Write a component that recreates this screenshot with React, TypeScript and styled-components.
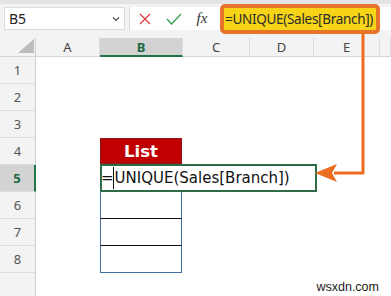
import React from "react";
import styled, { createGlobalStyle } from "styled-components";

const Global = createGlobalStyle`
  html, body { margin: 0; padding: 0; background: #ffffff; overflow: hidden; }
  * { box-sizing: border-box; }
`;

const Screen = styled.div`
  position: relative;
  width: 391px;
  height: 296px;
  overflow: hidden;
  background: #ffffff;
  font-family: "Noto Sans", "Open Sans", sans-serif;
`;

const Toolbar = styled.div`
  display: flex;
  align-items: center;
  height: 38px;
  padding: 0 0 5px 4px;
  background: #f3f3f3;
  border-top: 4px solid #e4e4e4;
`;

const NameBox = styled.div`
  display: flex;
  align-items: center;
  justify-content: space-between;
  width: 121px;
  height: 23px;
  padding: 0 4px 0 4px;
  background: #ffffff;
  border: 1px solid #dadada;
  font-family: "Noto Sans", sans-serif;
  font-size: 14px;
  color: #222;
`;

const FormulaArea = styled.div`
  display: flex;
  align-items: center;
  flex: 1;
  height: 23px;
  margin-left: 4px;
  background: #ffffff;
  border-left: 1px solid #dadada;
`;

const IconSlot = styled.div<{ $w: number }>`
  display: flex;
  align-items: center;
  justify-content: center;
  width: ${(p) => p.$w}px;
  height: 23px;
`;

const Fx = styled.span`
  font-family: "Liberation Serif", serif;
  font-style: italic;
  font-size: 15px;
  color: #333;
`;

const Highlight = styled.div`
  display: flex;
  align-items: center;
  width: 160px;
  height: 30px;
  margin-left: 4px;
  padding-left: 1px;
  background: #f7d417;
  border: 4px solid #e8732a;
  border-radius: 5px;
  font-family: "Noto Sans", sans-serif;
  font-size: 13.5px;
  letter-spacing: -0.3px;
  color: #2b2b2b;
  white-space: nowrap;
  overflow: hidden;
`;

const Sheet = styled.div`
  position: relative;
  display: grid;
  grid-template-columns: 36px 64px 83px 67px 64px 66px 1fr;
  grid-template-rows: 19px repeat(9, 27px);
`;

const Corner = styled.div`
  position: relative;
  background: #f3f3f3;
  border-right: 1px solid #cfcfcf;
  border-bottom: 1px solid #d6d6d6;
`;

const Triangle = styled.div`
  position: absolute;
  right: 1px;
  bottom: 3px;
  width: 0;
  height: 0;
  border-left: 16px solid transparent;
  border-bottom: 14px solid #bdbdbd;
`;

const ColHead = styled.div<{ $sel?: boolean }>`
  display: flex;
  align-items: center;
  justify-content: center;
  background: ${(p) => (p.$sel ? "#d3d3d3" : "#f3f3f3")};
  border-right: 1px solid #dcdcdc;
  border-bottom: ${(p) => (p.$sel ? "2px solid #217346" : "1px solid #d6d6d6")};
  font-size: 13px;
  font-weight: ${(p) => (p.$sel ? 700 : 400)};
  color: ${(p) => (p.$sel ? "#1e6b41" : "#444")};
`;

const RowHead = styled.div<{ $sel?: boolean }>`
  display: flex;
  align-items: center;
  justify-content: center;
  background: ${(p) => (p.$sel ? "#d3d3d3" : "#f3f3f3")};
  border-bottom: 1px solid #dcdcdc;
  border-right: ${(p) => (p.$sel ? "2px solid #217346" : "1px solid #cfcfcf")};
  font-size: 13px;
  font-weight: ${(p) => (p.$sel ? 700 : 400)};
  color: ${(p) => (p.$sel ? "#1e6b41" : "#555")};
`;

const Cell = styled.div`
  background: #ffffff;
`;

const ListHead = styled.div`
  display: flex;
  align-items: center;
  justify-content: center;
  margin-right: 1px;
  margin-bottom: 1px;
  background: #c00000;
  border: 1px solid #8c1a1a;
  font-family: "DejaVu Sans", sans-serif;
  font-weight: 700;
  font-size: 16.5px;
  color: #ffffff;
`;

const ListCell = styled.div<{ $last?: boolean }>`
  margin-right: 1px;
  background: #ffffff;
  border-left: 1px solid #41709c;
  border-right: 1px solid #41709c;
  border-bottom: 1px solid ${(p) => (p.$last ? "#41709c" : "#111111")};
`;

const Editor = styled.div`
  position: absolute;
  left: 100px;
  top: 126px;
  width: 217px;
  height: 28px;
  display: flex;
  align-items: center;
  background: #ffffff;
  border: 2px solid #2f6b47;
  font-family: "DejaVu Sans", sans-serif;
  font-size: 15px;
  color: #111;
  white-space: nowrap;
`;

const Lead = styled.span`
  margin-left: -1px;
  margin-right: -1px;
`;

const Caret = styled.span`
  display: inline-block;
  width: 1px;
  height: 22px;
  margin: 0 1px 0 0;
  background: #111;
`;

const Overlay = styled.svg`
  position: absolute;
  left: 0;
  top: 0;
  pointer-events: none;
`;

const Watermark = styled.div`
  position: absolute;
  right: 12px;
  bottom: 2px;
  font-family: "Liberation Sans", sans-serif;
  font-size: 12.5px;
  color: #1a1a1a;
`;

const cols = ["A", "B", "C", "D", "E", ""];

export default function App() {
  const rows = [1, 2, 3, 4, 5, 6, 7, 8, 9];
  return (
    <Screen>
      <Global />
      <Toolbar>
        <NameBox>
          <span>B5</span>
          <svg width="8" height="6" viewBox="0 0 8 6">
            <polyline points="1,1.5 4,4.5 7,1.5" fill="none" stroke="#444" strokeWidth="1.1" />
          </svg>
        </NameBox>
        <FormulaArea>
          <IconSlot $w={30}>
            <svg width="12" height="12" viewBox="0 0 12 12">
              <line x1="1" y1="1" x2="11" y2="11" stroke="#e23b3b" strokeWidth="1.2" />
              <line x1="11" y1="1" x2="1" y2="11" stroke="#e23b3b" strokeWidth="1.2" />
            </svg>
          </IconSlot>
          <IconSlot $w={28}>
            <svg width="16" height="12" viewBox="0 0 16 12">
              <polyline points="1,6 5.5,11 15,1" fill="none" stroke="#2f9a4c" strokeWidth="1.2" />
            </svg>
          </IconSlot>
          <IconSlot $w={28}>
            <Fx>fx</Fx>
          </IconSlot>
          <Highlight>=UNIQUE(Sales[Branch])</Highlight>
        </FormulaArea>
      </Toolbar>
      <Sheet>
        <Corner>
          <Triangle />
        </Corner>
        {cols.map((c) => (
          <ColHead key={c || "x"} $sel={c === "B"}>
            {c}
          </ColHead>
        ))}
        {rows.map((r) => (
          <React.Fragment key={r}>
            <RowHead $sel={r === 5}>{r <= 8 ? r : ""}</RowHead>
            {cols.map((c) => {
              const k = `${c}${r}`;
              if (c === "B" && r === 4) return <ListHead key={k}>List</ListHead>;
              if (c === "B" && r >= 6 && r <= 8) return <ListCell key={k} $last={r === 8} />;
              return <Cell key={k} />;
            })}
          </React.Fragment>
        ))}
        <Editor>
          <Lead>=</Lead>
          <Caret />
          UNIQUE(Sales[Branch])
        </Editor>
      </Sheet>
      <Overlay width="391" height="296" viewBox="0 0 391 296">
        <polyline
          points="363,33 363,173 334,173"
          fill="none"
          stroke="#ec6d1f"
          strokeWidth="3"
          strokeLinejoin="round"
        />
        <polygon points="315,173 337,164 332,173 337,182" fill="#ec6d1f" />
      </Overlay>
      <Watermark>wsxdn.com</Watermark>
    </Screen>
  );
}
